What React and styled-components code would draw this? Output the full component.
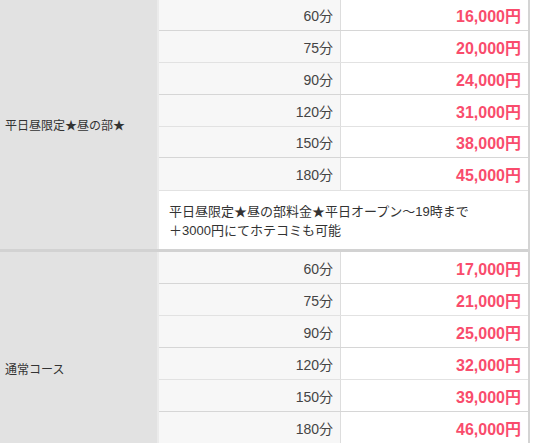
import React from 'react';
import styled, { createGlobalStyle } from 'styled-components';

const GlobalStyle = createGlobalStyle`
    html, body {
        margin: 0;
        padding: 0;
        background: #ffffff;
    }
    body {
        font-family: "Liberation Sans", "Noto Sans CJK JP", sans-serif;
        color: #333333;
    }
`;

const Table = styled.div`
    width: 528px;
    border-right: 2px solid #d4d4d4;
`;

const Group = styled.div`
    display: flex;
    border-bottom: 3px solid #d2d2d2;
`;

const Label = styled.div`
    width: 159px;
    flex-shrink: 0;
    display: flex;
    align-items: center;
    padding-left: 5px;
    box-sizing: border-box;
    background: #e2e2e2;
    border-right: 2px solid #ebebeb;
    font-size: 12px;
    color: #333333;
`;

const Body = styled.div`
    flex: 1;
    display: flex;
    flex-direction: column;
`;

const Row = styled.div`
    display: grid;
    grid-template-columns: 182px 1fr;
    height: ${p => p.$h}px;
    box-sizing: border-box;
    border-bottom: 1px solid ${p => (p.$dotted ? '#e2e2e2' : '#d6d6d6')};
`;

const Time = styled.div`
    display: flex;
    align-items: center;
    justify-content: flex-end;
    padding-right: 7px;
    background: #f7f7f7;
    border-right: 1px solid #dddddd;
    font-size: 14px;
    color: #444444;
`;

const Price = styled.div`
    display: flex;
    align-items: center;
    justify-content: flex-end;
    padding-right: 7px;
    background: #ffffff;
    font-size: 16px;
    font-weight: bold;
    color: #f94c6c;
`;

const Note = styled.div`
    height: ${p => p.$h}px;
    box-sizing: border-box;
    padding: 11px 10px 0 10px;
    background: #ffffff;
    font-size: 13px;
    line-height: 19px;
    color: #333333;
`;

const courses = [
    {
        name: '平日昼限定★昼の部★',
        prices: ['16,000', '20,000', '24,000', '31,000', '38,000', '45,000'],
        heights: [31, 32, 32, 32, 31, 33],
        note: ['平日昼限定★昼の部料金★平日オープン～19時まで', '＋3000円にてホテコミも可能'],
        noteHeight: 58,
    },
    {
        name: '通常コース',
        prices: ['17,000', '21,000', '25,000', '32,000', '39,000', '46,000'],
        heights: [32, 32, 32, 32, 32, 32],
        note: [],
        noteHeight: 40,
    },
];

const times = ['60分', '75分', '90分', '120分', '150分', '180分'];

function App() {
    return (
        <>
            <GlobalStyle />
            <Table>
                {courses.map(c => (
                    <Group key={c.name}>
                        <Label>{c.name}</Label>
                        <Body>
                            {c.prices.map((p, i) => (
                                <Row key={i} $h={c.heights[i]} $dotted={i % 2 === 1}>
                                    <Time>{times[i]}</Time>
                                    <Price>{p}円</Price>
                                </Row>
                            ))}
                            <Note $h={c.noteHeight}>
                                {c.note.map(line => (
                                    <div key={line}>{line}</div>
                                ))}
                            </Note>
                        </Body>
                    </Group>
                ))}
            </Table>
        </>
    );
}

export default App;
